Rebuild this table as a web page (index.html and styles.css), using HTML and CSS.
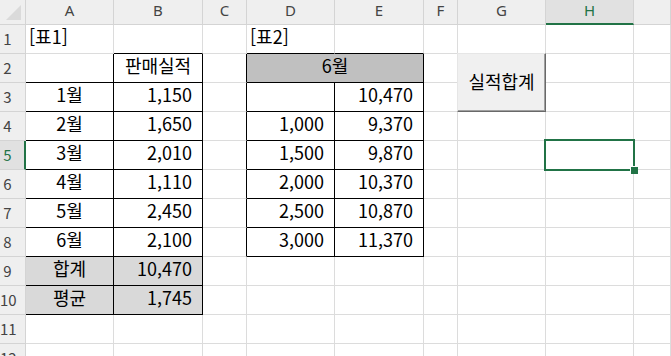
FILE: index.html
```html
<!DOCTYPE html>
<html lang="ko">
<head>
<meta charset="utf-8">
<title>판매실적</title>
<link rel="stylesheet" href="styles.css">
</head>
<body>
<div class="sheet">
  <div class="row head">
    <div class="c corner"><svg width="25" height="24" viewBox="0 0 25 24"><polygon points="6,20 21,20 21,5" fill="#dadada"/></svg></div>
    <div class="c">A</div>
    <div class="c">B</div>
    <div class="c">C</div>
    <div class="c">D</div>
    <div class="c">E</div>
    <div class="c">F</div>
    <div class="c">G</div>
    <div class="c on">H</div>
    <div class="c"></div>
  </div>

  <div class="row">
    <div class="c rh">1</div>
    <div class="c lft">[표1]</div>
    <div class="c eb"></div>
    <div class="c"></div>
    <div class="c lft eb">[표2]</div>
    <div class="c eb"></div>
    <div class="c"></div><div class="c"></div><div class="c"></div><div class="c"></div>
  </div>

  <div class="row">
    <div class="c rh">2</div>
    <div class="c t"></div>
    <div class="c t ctr">판매실적</div>
    <div class="c er"></div>
    <div class="c t ctr span2 grey">6월</div>
    <div class="c"></div><div class="c"></div><div class="c"></div><div class="c"></div>
  </div>

  <div class="row">
    <div class="c rh">3</div>
    <div class="c t ctr">1월</div>
    <div class="c t num">1,150</div>
    <div class="c er"></div>
    <div class="c t num"></div>
    <div class="c t num">10,470</div>
    <div class="c"></div><div class="c"></div><div class="c"></div><div class="c"></div>
  </div>

  <div class="row">
    <div class="c rh">4</div>
    <div class="c t ctr">2월</div>
    <div class="c t num">1,650</div>
    <div class="c er"></div>
    <div class="c t num">1,000</div>
    <div class="c t num">9,370</div>
    <div class="c"></div><div class="c"></div><div class="c"></div><div class="c"></div>
  </div>

  <div class="row">
    <div class="c rh on">5</div>
    <div class="c t ctr">3월</div>
    <div class="c t num">2,010</div>
    <div class="c er"></div>
    <div class="c t num">1,500</div>
    <div class="c t num">9,870</div>
    <div class="c"></div><div class="c"></div><div class="c"></div><div class="c"></div>
  </div>

  <div class="row">
    <div class="c rh">6</div>
    <div class="c t ctr">4월</div>
    <div class="c t num">1,110</div>
    <div class="c er"></div>
    <div class="c t num">2,000</div>
    <div class="c t num">10,370</div>
    <div class="c"></div><div class="c"></div><div class="c"></div><div class="c"></div>
  </div>

  <div class="row">
    <div class="c rh">7</div>
    <div class="c t ctr">5월</div>
    <div class="c t num">2,450</div>
    <div class="c er"></div>
    <div class="c t num">2,500</div>
    <div class="c t num">10,870</div>
    <div class="c"></div><div class="c"></div><div class="c"></div><div class="c"></div>
  </div>

  <div class="row">
    <div class="c rh">8</div>
    <div class="c t ctr">6월</div>
    <div class="c t num">2,100</div>
    <div class="c er"></div>
    <div class="c t num">3,000</div>
    <div class="c t num">11,370</div>
    <div class="c"></div><div class="c"></div><div class="c"></div><div class="c"></div>
  </div>

  <div class="row">
    <div class="c rh">9</div>
    <div class="c t ctr fill">합계</div>
    <div class="c t num fill">10,470</div>
    <div class="c"></div><div class="c"></div><div class="c"></div><div class="c"></div><div class="c"></div><div class="c"></div><div class="c"></div>
  </div>

  <div class="row">
    <div class="c rh">10</div>
    <div class="c t ctr fill">평균</div>
    <div class="c t num fill">1,745</div>
    <div class="c"></div><div class="c"></div><div class="c"></div><div class="c"></div><div class="c"></div><div class="c"></div><div class="c"></div>
  </div>

  <div class="row">
    <div class="c rh">11</div>
    <div class="c"></div><div class="c"></div><div class="c"></div><div class="c"></div><div class="c"></div><div class="c"></div><div class="c"></div><div class="c"></div><div class="c"></div>
  </div>

  <div class="row">
    <div class="c rh">12</div>
    <div class="c"></div><div class="c"></div><div class="c"></div><div class="c"></div><div class="c"></div><div class="c"></div><div class="c"></div><div class="c"></div><div class="c"></div>
  </div>

  <button class="macro-btn" type="button">실적합계</button>
  <div class="selection"></div>
  <div class="fill-handle"></div>
</div>
</body>
</html>
```

FILE: styles.css
```css
* {
  box-sizing: border-box;
}

html, body {
  margin: 0;
  padding: 0;
  background: #ffffff;
  overflow: hidden;
}

.sheet {
  position: relative;
  width: 671px;
  height: 356px;
  overflow: hidden;
  font-family: "Noto Sans CJK KR", "Noto Sans", sans-serif;
  font-size: 18px;
  color: #000000;
}

.row {
  display: grid;
  grid-template-columns: 26px 88px 89px 44px 88px 89px 34px 88px 88px 1fr;
  height: 29px;
}

.c {
  height: 29px;
  border-right: 1px solid #dcdcdc;
  border-bottom: 1px solid #dcdcdc;
  line-height: 22px;
  padding-bottom: 6px;
  white-space: nowrap;
}

/* column header strip */
.head {
  height: 25px;
}

.head .c {
  height: 25px;
  padding: 0;
  background: #efefef;
  border-right-color: #d4d4d4;
  border-bottom-color: #d4d4d4;
  font-family: "Noto Sans", sans-serif;
  font-size: 15px;
  line-height: 21px;
  color: #444444;
  text-align: center;
}

.head .corner {
  line-height: 0;
}

.head .on {
  background: #e1e1e1;
  color: #217346;
  border-bottom: 2px solid #217346;
}

/* row numbers */
.rh {
  background: #efefef;
  border-right-color: #d4d4d4;
  border-bottom-color: #d4d4d4;
  font-size: 15px;
  line-height: 28px;
  padding: 0 10px 0 0;
  text-align: center;
  color: #444444;
}

.rh.on {
  background: #e1e1e1;
  color: #217346;
  border-right: 2px solid #217346;
  padding-right: 9px;
}

/* cell alignment */
.lft {
  padding-left: 3px;
}

.ctr {
  text-align: center;
}

.num {
  text-align: right;
  padding-right: 10px;
}

.span2 {
  grid-column: span 2;
}

/* ruled table borders */
.t {
  border-right-color: #000000;
  border-bottom-color: #000000;
}

.eb {
  border-bottom-color: #000000;
}

.er {
  border-right-color: #000000;
}

.fill {
  background: #d9d9d9;
}

.grey {
  background: #c0c0c0;
}

/* form button placed over G2:G3 */
.macro-btn {
  position: absolute;
  left: 457px;
  top: 53px;
  width: 89px;
  height: 59px;
  margin: 0;
  padding: 0 0 4px 0;
  background: #f0f0f0;
  border: 0;
  border-left: 1px solid #e6e6e6;
  border-top: 1px solid #e6e6e6;
  border-right: 1px solid #696969;
  border-bottom: 1px solid #696969;
  box-shadow: inset -1px -1px 0 #a0a0a0;
  font-family: "Noto Sans CJK KR", "Noto Sans", sans-serif;
  font-size: 18px;
  color: #000000;
}

/* active cell H5 */
.selection {
  position: absolute;
  left: 544px;
  top: 139px;
  width: 91px;
  height: 32px;
  border: 2px solid #217346;
}

.fill-handle {
  position: absolute;
  left: 630px;
  top: 166px;
  width: 8px;
  height: 8px;
  background: #217346;
  border: 1px solid #ffffff;
  border-right: 0;
  border-bottom: 0;
}
```
